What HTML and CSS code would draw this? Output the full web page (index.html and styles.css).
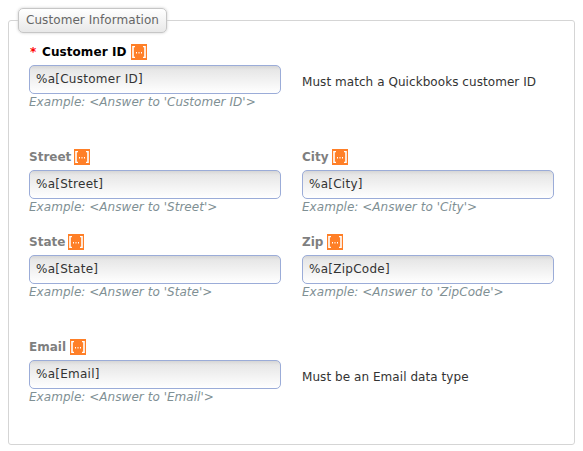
FILE: index.html
```html
<!DOCTYPE html>
<html lang="en">
<head>
<meta charset="utf-8">
<title>Customer Information</title>
<link rel="stylesheet" href="styles.css">
</head>
<body>
<svg class="defs" width="0" height="0" aria-hidden="true">
  <symbol id="merge" viewBox="0 0 16 16">
    <rect width="16" height="16" fill="#ff7f27"/>
    <path d="M1.2 2H4v1.3H2.8v9.4H4V14H1.2zM14.8 2H12v1.3h1.2v9.4H12V14h2.8z" fill="#fff"/>
    <path d="M5 8h1v1.4H5zM7.5 8h1v1.4h-1zM10 8h1v1.4h-1z" fill="#fff"/>
  </symbol>
</svg>
<fieldset class="panel">
  <legend class="legend">Customer Information</legend>
  <div class="row row-spaced">
    <div class="field">
      <label class="label required" for="id"><span class="star">*</span><span>Customer ID</span><svg class="icon"><use href="#merge"/></svg></label>
      <input class="input" id="id" value="%a[Customer ID]">
      <div class="hint">Example: &lt;Answer to 'Customer ID'&gt;</div>
    </div>
    <div class="note">Must match a Quickbooks customer ID</div>
  </div>
  <div class="row">
    <div class="field">
      <label class="label snug" for="street"><span>Street</span><svg class="icon"><use href="#merge"/></svg></label>
      <input class="input" id="street" value="%a[Street]">
      <div class="hint">Example: &lt;Answer to 'Street'&gt;</div>
    </div>
    <div class="field">
      <label class="label" for="city"><span>City</span><svg class="icon"><use href="#merge"/></svg></label>
      <input class="input" id="city" value="%a[City]">
      <div class="hint">Example: &lt;Answer to 'City'&gt;</div>
    </div>
  </div>
  <div class="row row-spaced">
    <div class="field">
      <label class="label snug" for="state"><span>State</span><svg class="icon"><use href="#merge"/></svg></label>
      <input class="input" id="state" value="%a[State]">
      <div class="hint">Example: &lt;Answer to 'State'&gt;</div>
    </div>
    <div class="field">
      <label class="label" for="zip"><span>Zip</span><svg class="icon"><use href="#merge"/></svg></label>
      <input class="input" id="zip" value="%a[ZipCode]">
      <div class="hint">Example: &lt;Answer to 'ZipCode'&gt;</div>
    </div>
  </div>
  <div class="row">
    <div class="field">
      <label class="label" for="email"><span>Email</span><svg class="icon"><use href="#merge"/></svg></label>
      <input class="input" id="email" value="%a[Email]">
      <div class="hint">Example: &lt;Answer to 'Email'&gt;</div>
    </div>
    <div class="note">Must be an Email data type</div>
  </div>
</fieldset>
</body>
</html>
```
FILE: styles.css
```css
* { box-sizing: border-box; }
body {
  margin: 0;
  padding: 8px;
  background: #fff;
  color: #333;
  font: 12px/16px "DejaVu Sans", sans-serif;
  overflow: hidden;
}
.defs { display: block; }
.panel {
  width: 567px;
  height: 437px;
  margin: 0;
  padding: 9px 20px 0;
  border: 1px solid #d5d5d5;
  border-radius: 3px;
  min-width: 0;
}
.legend {
  width: 149px;
  height: 25px;
  margin-left: -11px;
  padding: 0 0 0 7px;
  border: 1px solid #c6c6c6;
  border-radius: 5px;
  background: linear-gradient(#fff, #e8e8e8);
  box-shadow: 0 0 3px #ccc;
  color: #666;
  letter-spacing: 0.07px;
  line-height: 23px;
  white-space: nowrap;
}
.row {
  display: grid;
  grid-template-columns: 252px 252px;
  column-gap: 21px;
  height: 85px;
}
.row-spaced { height: 105px; }
.label {
  display: flex;
  align-items: flex-start;
  gap: 4px;
  height: 23px;
  padding-top: 2px;
  color: #7f7f7f;
  font-weight: bold;
  line-height: 17px;
}
.snug { gap: 3px; }
.required {
  padding-left: 1px;
  color: #000;
  letter-spacing: 0.08px;
}
.star { width: 8px; color: #f00; }
.icon { width: 16px; height: 16px; }
.input {
  display: block;
  width: 252px;
  height: 29px;
  padding: 0 6px 2px;
  border: 1px solid #9bacd8;
  border-radius: 5px;
  background: linear-gradient(#d6d6d6, #e7e7e7 4px, #fff);
  color: #333;
  font: inherit;
  letter-spacing: 0.26px;
}
.hint {
  color: #7f9094;
  font-style: italic;
  letter-spacing: 0.04px;
  white-space: nowrap;
}
.note { padding-top: 32px; letter-spacing: 0.06px; white-space: nowrap; }
```
